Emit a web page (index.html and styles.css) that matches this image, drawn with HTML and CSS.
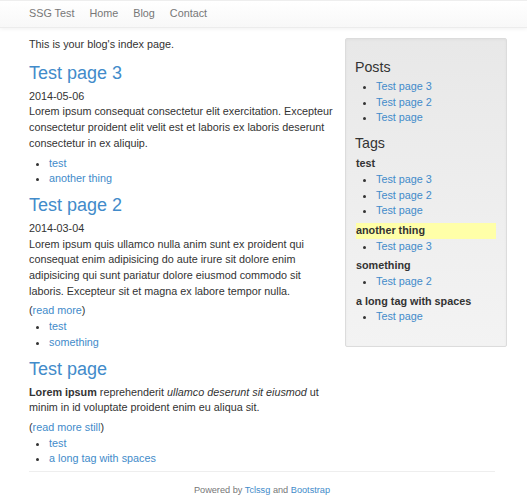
FILE: index.html
```html
<!DOCTYPE html>
<html>
<head>
<meta charset="utf-8">
<title>SSG Test</title>
<link rel="stylesheet" href="styles.css">
</head>
<body>
<nav class="navbar">
  <div class="nav-inner">
    <a class="nav-link" href="#">SSG Test</a>
    <a class="nav-link" href="#">Home</a>
    <a class="nav-link" href="#">Blog</a>
    <a class="nav-link" href="#">Contact</a>
  </div>
</nav>
<div class="container">
  <div class="row">
    <main class="main">
      <p class="intro">This is your blog's index page.</p>

      <article class="post">
        <h2 class="post-title"><a href="#">Test page 3</a></h2>
        <div class="post-date">2014-05-06</div>
        <p class="post-body">Lorem ipsum consequat consectetur elit exercitation. Excepteur consectetur proident elit velit est et laboris ex laboris deserunt consectetur in ex aliquip.</p>
        <ul class="tag-list">
          <li><a href="#">test</a></li>
          <li><a href="#">another thing</a></li>
        </ul>
      </article>

      <article class="post">
        <h2 class="post-title"><a href="#">Test page 2</a></h2>
        <div class="post-date">2014-03-04</div>
        <p class="post-body">Lorem ipsum quis ullamco nulla anim sunt ex proident qui consequat enim adipisicing do aute irure sit dolore enim adipisicing qui sunt pariatur dolore eiusmod commodo sit laboris. Excepteur sit et magna ex labore tempor nulla.</p>
        <div class="read-more">(<a href="#">read more</a>)</div>
        <ul class="tag-list">
          <li><a href="#">test</a></li>
          <li><a href="#">something</a></li>
        </ul>
      </article>

      <article class="post">
        <h2 class="post-title"><a href="#">Test page</a></h2>
        <p class="post-body"><strong>Lorem ipsum</strong> reprehenderit <em>ullamco deserunt sit eiusmod</em> ut minim in id voluptate proident enim eu aliqua sit.</p>
        <div class="read-more">(<a href="#">read more still</a>)</div>
        <ul class="tag-list last">
          <li><a href="#">test</a></li>
          <li><a href="#">a long tag with spaces</a></li>
        </ul>
      </article>
    </main>

    <aside class="sidebar">
      <h4 class="side-title">Posts</h4>
      <ul class="side-list">
        <li><a href="#">Test page 3</a></li>
        <li><a href="#">Test page 2</a></li>
        <li><a href="#">Test page</a></li>
      </ul>
      <h4 class="side-title tags-title">Tags</h4>
      <div class="tag-block">
        <div class="tag-name">test</div>
        <ul class="side-list">
          <li><a href="#">Test page 3</a></li>
          <li><a href="#">Test page 2</a></li>
          <li><a href="#">Test page</a></li>
        </ul>
      </div>
      <div class="tag-block">
        <div class="tag-name highlight">another thing</div>
        <ul class="side-list">
          <li><a href="#">Test page 3</a></li>
        </ul>
      </div>
      <div class="tag-block">
        <div class="tag-name">something</div>
        <ul class="side-list">
          <li><a href="#">Test page 2</a></li>
        </ul>
      </div>
      <div class="tag-block">
        <div class="tag-name">a long tag with spaces</div>
        <ul class="side-list">
          <li><a href="#">Test page</a></li>
        </ul>
      </div>
    </aside>
  </div>
  <footer class="footer">
    Powered by <a href="#">Tclssg</a> and <a href="#">Bootstrap</a>
  </footer>
</div>
</body>
</html>
```

FILE: styles.css
```css
* { box-sizing: border-box; }

html, body {
  margin: 0;
  padding: 0;
  background: #fff;
}

body {
  font-family: "Liberation Sans", Arial, Helvetica, sans-serif;
  font-size: 10.8px;
  line-height: 15.7px;
  color: #333;
}

a {
  color: #428bca;
  text-decoration: none;
}

.navbar {
  height: 28px;
  background: linear-gradient(to bottom, #ffffff 0%, #f8f8f8 100%);
  border-top: 1px solid #eeeeee;
  border-bottom: 1px solid #ececec;
  box-shadow: 0 1px 4px rgba(0, 0, 0, 0.06);
}

.nav-inner {
  display: flex;
  align-items: center;
  height: 100%;
  padding-left: 29px;
  gap: 15px;
}

.nav-link {
  color: #777;
  font-size: 10.8px;
}

.container {
  padding: 0 20px 0 29px;
}

.row {
  display: grid;
  grid-template-columns: 306px 162px;
  column-gap: 10px;
  align-items: start;
}

.main {
  padding-top: 9px;
}

.intro {
  margin: 0 0 9px;
}

.post-title {
  font-size: 18px;
  font-weight: 500;
  line-height: 21px;
  margin: 0 0 5px;
  padding-top: 1px;
}

.post-date {
  margin: 0;
}

.post-body {
  margin: 0 0 4px;
}

.read-more {
  margin: 0;
}

.tag-list {
  margin: 0 0 7px;
  padding-left: 20px;
}

.tag-list.last {
  margin-bottom: 0;
}

.sidebar {
  margin-top: 10px;
  padding: 10px 10px 17px;
  background: linear-gradient(to bottom, #e8e8e8 0%, #f3f3f3 100%);
  border: 1px solid #dcdcdc;
  border-radius: 2px;
  box-shadow: inset 0 1px 3px rgba(0, 0, 0, 0.04);
}

.side-title {
  font-size: 14.2px;
  font-weight: 500;
  line-height: 16px;
  margin: 10px 0 4px;
  margin-left: -1px;
}

.tags-title {
  margin-top: 9px;
  margin-bottom: 5px;
}

.side-list {
  margin: 0;
  padding-left: 20px;
}

.tag-block {
  margin-bottom: 4px;
}

.tag-name {
  font-weight: bold;
}

.highlight {
  background: #ffffa8;
}

.footer {
  width: 466px;
  margin-top: 4px;
  border-top: 1px solid #eeeeee;
  padding-top: 11px;
  text-align: center;
  font-size: 9.2px;
  color: #777;
}
```
